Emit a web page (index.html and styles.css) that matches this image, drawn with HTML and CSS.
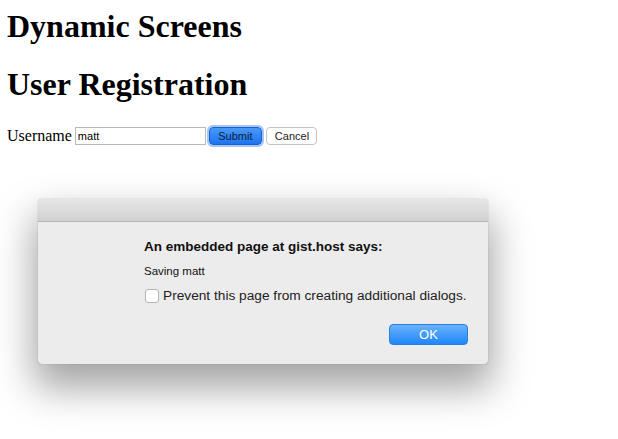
FILE: index.html
```html
<!DOCTYPE html>
<html>
<head>
<meta charset="utf-8">
<link rel="stylesheet" href="styles.css">
</head>
<body>
<h1 class="title first">Dynamic Screens</h1>
<h1 class="title">User Registration</h1>
<form class="reg">
  <label class="lbl">Username</label>
  <input class="field" type="text" value="matt">
  <button type="button" class="btn btn-submit">Submit</button>
  <button type="button" class="btn btn-cancel">Cancel</button>
</form>
<div class="sheet">
  <div class="sheet-bar"></div>
  <div class="sheet-body">
    <p class="sheet-head">An embedded page at gist.host says:</p>
    <p class="sheet-msg">Saving matt</p>
    <div class="sheet-check"><span class="box"></span><span>Prevent this page from creating additional dialogs.</span></div>
    <div class="sheet-actions"><button type="button" class="ok">OK</button></div>
  </div>
</div>
</body>
</html>
```

FILE: styles.css
```css
html { background: #fff; }
body {
  margin: 0;
  padding: 8px 7px;
  min-height: 439px;
  box-sizing: border-box;
  background: #fff;
  font-family: "Liberation Serif", "Times New Roman", serif;
  color: #000;
}
.title {
  font-size: 32px;
  font-weight: bold;
  margin: 21px 0 20px;
  line-height: 37px;
}
.title.first { margin-top: 0; }
.reg {
  display: flex;
  align-items: center;
  height: 20px;
  margin-top: 23px;
}
.lbl { font-size: 16px; margin-right: 3px; }
.field {
  width: 131px;
  height: 18px;
  box-sizing: border-box;
  border: 1px solid #b8b8b8;
  padding: 1px 2px;
  font-family: "Liberation Sans", Arial, sans-serif;
  font-size: 11px;
  color: #000;
  margin: 0 3px 0 0;
  outline: none;
}
.btn {
  font-family: "Liberation Sans", Arial, sans-serif;
  font-size: 11px;
  height: 18px;
  box-sizing: border-box;
  border-radius: 4px;
  padding: 0 8px;
  margin: 0 4px 0 0;
}
.btn-submit {
  width: 53px;
  background: linear-gradient(#4a9af8, #1c74f1);
  border: 1px solid #1a5fd0;
  color: #0d1d3a;
  box-shadow: 0 0 0 2px rgba(90, 150, 240, 0.55);
  margin-right: 4px;
}
.btn-cancel {
  width: 51px;
  background: #fff;
  border: 1px solid #c4c4c4;
  color: #222;
}
.sheet {
  margin: 53px 0 0 31px;
  width: 450px;
  height: 165px;
  background: #ececec;
  border-radius: 4px;
  box-shadow: 0 20px 38px 4px rgba(0, 0, 0, 0.36), 0 0 1px rgba(0, 0, 0, 0.45);
  font-family: "Liberation Sans", Arial, sans-serif;
  overflow: hidden;
}
.sheet-bar {
  height: 22px;
  background: linear-gradient(#e6e6e6, #d1d1d1);
  border-bottom: 1px solid #b3b3b3;
}
.sheet-body {
  padding: 17px 10px 0 106px;
}
.sheet-head {
  margin: 0;
  font-size: 13.5px;
  font-weight: bold;
  color: #111;
  line-height: 16px;
}
.sheet-msg {
  margin: 9px 0 0;
  font-size: 11.5px;
  color: #111;
  line-height: 14px;
}
.sheet-check {
  display: flex;
  align-items: center;
  margin-top: 10px;
  font-size: 13.7px;
  color: #222;
  line-height: 16px;
  white-space: nowrap;
}
.box {
  flex: none;
  width: 12px;
  height: 12px;
  border: 1px solid #b5b5b5;
  border-radius: 3px;
  background: #fff;
  margin-right: 4px;
  margin-left: 1px;
}
.sheet-actions {
  display: flex;
  justify-content: flex-end;
  margin-top: 20px;
  padding-right: 10px;
}
.ok {
  width: 79px;
  height: 21px;
  border-radius: 4px;
  border: 1px solid #2b7fe0;
  background: linear-gradient(#6ab2fa, #1f86fb);
  color: #fff;
  font-family: "Liberation Sans", Arial, sans-serif;
  font-size: 13px;
  padding: 0;
}
```
